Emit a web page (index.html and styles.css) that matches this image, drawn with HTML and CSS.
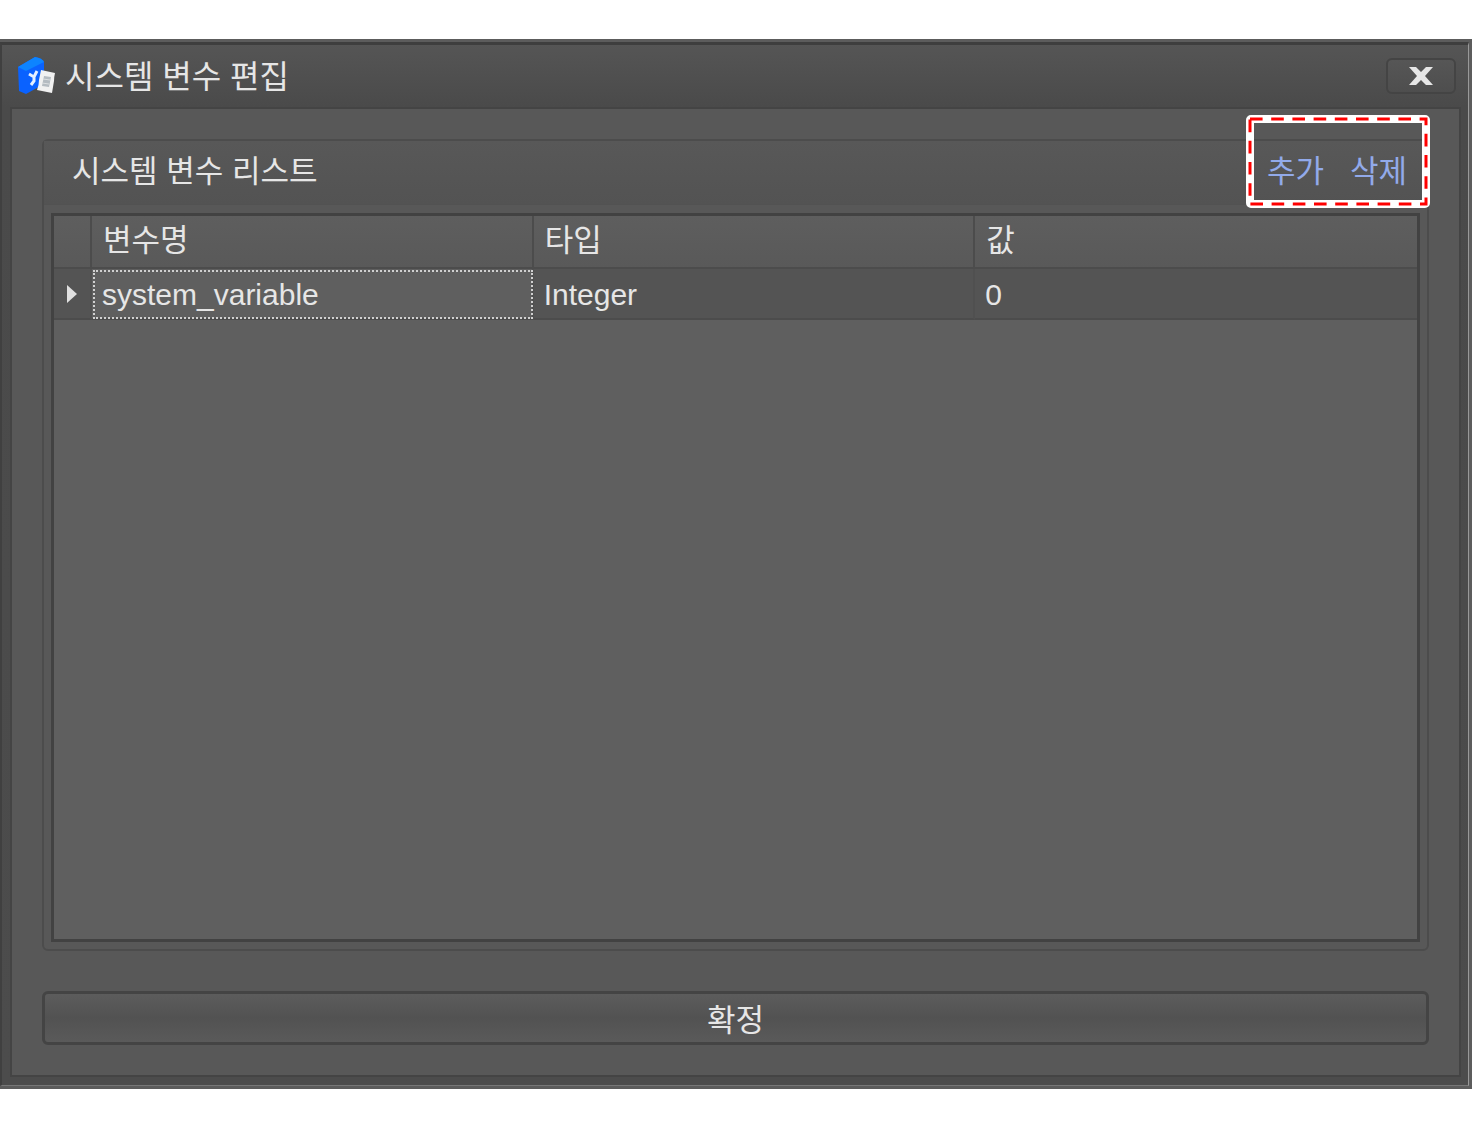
FILE: index.html
```html
<!DOCTYPE html>
<html lang="ko">
<head>
    <meta charset="UTF-8">
    <meta name="viewport" content="width=device-width, initial-scale=1.0">
    <title>시스템 변수 편집</title>
    <link rel="stylesheet" href="styles.css">
</head>
<body>
    <div class="window">
        <div class="frame">
            <header class="titlebar">
                <svg class="app-icon" width="40" height="40" viewBox="0 0 40 40" aria-hidden="true">
                    <path d="M1 11 L18 1 Q25 2 27 6 L27 28 L9 38 L2 35 Z" fill="#0a62ff"/>
                    <path d="M1 11 L18 1 Q25 2 27 6 L9 15 Z" fill="#0d84ff"/>
                    <path d="M12 18 L17 21 L20 15 M17 21 L17 25 L14 29" fill="none" stroke="#e4efff" stroke-width="3"/>
                    <path d="M24 14 L38 17 Q37 21 37 25 L35 37 L20 34 Q22 29 22 24 Z" fill="#f1f1f1"/>
                    <path d="M27 20 L34 21 L32 31 L25 30 Z" fill="#b4bbc1"/>
                    <path d="M26 23 L33 24 M25 27 L32 28" stroke="#dcdfe1" stroke-width="1"/>
                </svg>
                <h1>시스템 변수 편집</h1>
                <button type="button" class="close" aria-label="닫기">
                    <svg width="26" height="20" viewBox="0 0 26 20" aria-hidden="true">
                        <path d="M1 1 H8 L13 6 L18 1 H25 L17 10 L25 19 H18 L13 14 L8 19 H1 L9 10 Z" fill="#e6e6e6"/>
                    </svg>
                </button>
            </header>

            <main class="content">
                <section class="group">
                    <div class="group-header">
                        <h2>시스템 변수 리스트</h2>
                        <div class="actions">
                            <button type="button">추가</button>
                            <button type="button">삭제</button>
                        </div>
                    </div>
                    <svg class="highlight" width="184" height="93" viewBox="0 0 184 93" aria-hidden="true">
                        <rect x="4" y="4" width="176" height="85" rx="1" fill="none" stroke="#fff" stroke-width="8"/>
                        <path d="M4 4 H180 V89 H4 Z" fill="none" stroke="#f00" stroke-width="3" stroke-dasharray="12.6 8.6"/>
                    </svg>
                    <div class="grid">
                        <table>
                            <thead>
                                <tr>
                                    <th class="marker"></th>
                                    <th>변수명</th>
                                    <th>타입</th>
                                    <th>값</th>
                                </tr>
                            </thead>
                            <tbody>
                                <tr>
                                    <td class="marker">
                                        <svg width="10" height="18" viewBox="0 0 10 18" aria-hidden="true">
                                            <path d="M0 0 L10 9 L0 18 Z" fill="#e0e0e0"/>
                                        </svg>
                                    </td>
                                    <td class="focused">system_variable</td>
                                    <td>Integer</td>
                                    <td>0</td>
                                </tr>
                            </tbody>
                        </table>
                    </div>
                </section>
                <button type="button" class="confirm">확정</button>
            </main>
        </div>
    </div>
</body>
</html>
```
FILE: styles.css
```css
* {
    box-sizing: border-box;
}

body {
    margin: 0;
    padding: 39px 4px 46px 0;
    min-height: 100vh;
    display: flex;
    background-color: #fff;
    color: #e6e6e6;
    font-family: "Liberation Sans", "Noto Sans CJK KR", sans-serif;
    font-size: 30px;
}

h1, h2, th, button {
    margin: 0;
    font-family: "Noto Sans CJK KR", sans-serif;
    font-size: 31px;
    font-weight: normal;
    line-height: 40px;
    color: #e6e6e6;
}

.window {
    flex: 1;
    display: flex;
    border: 3px solid #5c5c5c;
    border-left: none;
}

.frame {
    flex: 1;
    display: flex;
    flex-direction: column;
    padding: 0 7px 8px 8px;
    border-top: 3px solid #3e3e3e;
    border-left: 2px solid #404040;
    border-right: 1px solid #999;
    border-bottom: 1px solid #777;
    background: linear-gradient(#555, #4a4a4a 62px, #4c4c4c);
}

.titlebar {
    height: 62px;
    display: flex;
    align-items: center;
    padding: 0 5px 0 7px;
}

.titlebar h1 {
    flex: 1;
    margin-left: 8px;
    padding-bottom: 4px;
    font-size: 32px;
}

.close {
    width: 70px;
    height: 36px;
    display: flex;
    align-items: center;
    justify-content: center;
    padding: 0;
    border: 2px solid #444;
    border-radius: 6px;
    background: linear-gradient(#565656, #4e4e4e);
}

.content {
    flex: 1;
    display: flex;
    flex-direction: column;
    gap: 40px;
    padding: 30px;
    border: 2px solid #444;
    background-color: #585858;
}

.group {
    flex: 1;
    display: flex;
    flex-direction: column;
    position: relative;
    padding: 0 7px 7px;
    border: 2px solid #4c4c4c;
    border-radius: 6px;
}

.group-header {
    height: 64px;
    display: flex;
    align-items: center;
    justify-content: space-between;
    margin: 0 -7px 8px;
    padding: 0 20px 7px 28px;
    border-bottom: 1px solid #525252;
    background: linear-gradient(#585858, #535353);
}

.actions {
    display: flex;
    gap: 26px;
}

.actions button {
    padding: 0;
    border: none;
    background: none;
    color: #92aaea;
    cursor: pointer;
}

/* dashed frame around the add / delete buttons */
.highlight {
    position: absolute;
    top: -26px;
    right: -3px;
    pointer-events: none;
}

.grid {
    flex: 1;
    border: 3px solid #424242;
    background-color: #5f5f5f;
}

table {
    width: 100%;
    table-layout: fixed;
    border-collapse: separate;
    border-spacing: 0;
}

th, td {
    text-align: left;
    border-bottom: 2px solid #4c4c4c;
}

th {
    height: 53px;
    padding: 0 11px 7px;
    border-right: 2px solid #4c4c4c;
    background: linear-gradient(#5e5e5e, #595959);
}

td {
    height: 51px;
    padding: 3px 10px 0;
    background-color: #545454;
    border-right: 2px solid #505050;
}

th:last-child, td:last-child {
    border-right: none;
}

.marker {
    width: 38px;
    padding: 0 0 0 13px;
}

.marker svg {
    display: block;
}

.focused {
    background-color: #5f5f5f;
    outline: 2px dotted #d0d0d0;
    outline-offset: -3px;
}

.confirm {
    height: 54px;
    padding: 0;
    border: 3px solid #444;
    border-radius: 6px;
    background: linear-gradient(#5c5c5c, #525252 50%, #5a5a5a);
    cursor: pointer;
}
```
